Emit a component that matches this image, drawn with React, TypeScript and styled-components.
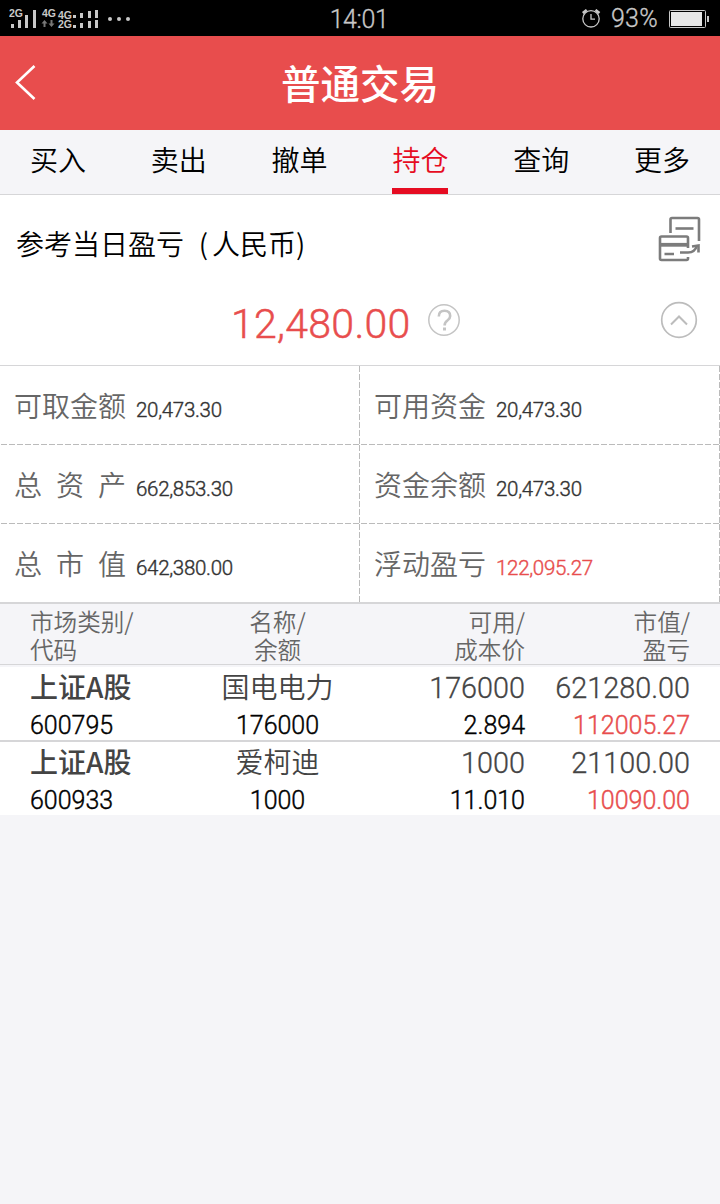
import React from 'react';
import styled, { createGlobalStyle } from 'styled-components';

const RED = '#e84d4d';
const LINE = '#d6d6d8';
const CJK = '"Noto Sans CJK SC", sans-serif';
const NUM = 'Roboto, "Noto Sans CJK SC", sans-serif';

const GlobalStyle = createGlobalStyle`
  * { box-sizing: border-box; }
  html, body { margin: 0; background: #f5f5f8; }
  body { font-family: ${CJK}; font-weight: 350; }
`;

const Screen = styled.div`
  width: 720px;
  min-height: 1204px;
  background: #f5f5f8;
`;

const StatusBar = styled.div`
  display: grid;
  grid-template-columns: 1fr auto 1fr;
  align-items: center;
  height: 36px;
  padding: 0 11px 0 9px;
  background: #000;
  color: #c8c8c8;
`;

const StatusSide = styled.div`
  display: flex;
  align-items: center;
  height: 36px;
`;

const StatusEnd = styled(StatusSide)`
  justify-content: flex-end;
`;

const Clock = styled.div`
  font: 300 25px/36px ${NUM};
  -webkit-text-stroke: 0.3px currentColor;
  letter-spacing: -0.4px;
  padding-top: 2px;
`;

const Percent = styled.span`
  font: 300 25px/36px ${NUM};
  -webkit-text-stroke: 0.3px currentColor;
  letter-spacing: 0.3px;
  margin: 0 11px 0 9px;
`;

const TitleBar = styled.header`
  display: grid;
  grid-template-columns: 60px 1fr 60px;
  align-items: center;
  height: 94px;
  background: ${RED};
  color: #fff;
`;

const Title = styled.h1`
  margin: 0 0 2px;
  text-align: center;
  font: 500 39.5px/58px ${CJK};
`;

const Tabs = styled.nav`
  display: flex;
  justify-content: space-between;
  height: 65px;
  padding: 0 30px;
  border-bottom: 1px solid ${LINE};
`;

const Tab = styled.div<{ $active?: boolean }>`
  height: 64px;
  width: 56px;
  font-size: 28px;
  line-height: 58px;
  white-space: nowrap;
  color: ${p => (p.$active ? '#e60c22' : '#000')};
  border-bottom: ${p => (p.$active ? '6px solid #e60c22' : '0')};
`;

const Summary = styled.section`
  height: 171px;
  background: #fff;
  border-bottom: 1px solid ${LINE};
`;

const SummaryHead = styled.div`
  display: flex;
  justify-content: space-between;
  align-items: center;
  height: 95px;
  padding: 0 18px 0 16px;

  > svg { margin-bottom: 8px; }
`;

const SummaryTitle = styled.div`
  font-size: 28px;
  line-height: 40px;
  color: #000;
`;

const Paren = styled.span`
  display: inline-block;
  width: 28px;
  padding-right: 4px;
  text-align: right;
`;

const SummaryValue = styled.div`
  display: grid;
  grid-template-columns: 231px auto 1fr auto;
  align-items: center;
  height: 60px;
  padding-right: 22px;
`;

const BigNumber = styled.div`
  grid-column: 2;
  font: 300 41px/60px ${NUM};
  -webkit-text-stroke: 0.5px currentColor;
  letter-spacing: 0.3px;
  color: ${RED};
  padding-top: 4px;
  margin-right: 17px;
`;

const Grid = styled.section`
  display: grid;
  grid-template-columns: 360px 360px;
  grid-template-rows: 79px 79px 78px;
  background: #fff;
`;

const Cell = styled.div<{ $last?: boolean }>`
  display: flex;
  align-items: baseline;
  padding: 19px 0 0 14px;
  background-image:
    repeating-linear-gradient(to bottom, #bbb 0 6px, transparent 6px 8px),
    repeating-linear-gradient(to right, #bbb 0 6px, transparent 6px 8px);
  background-size: 1px 100%, ${p => (p.$last ? '0 0' : '100% 1px')};
  background-position: right top, 1px bottom;
  background-repeat: no-repeat;
`;

const Label = styled.span`
  display: flex;
  justify-content: space-between;
  width: 112px;
  font-size: 28px;
  line-height: 40px;
  color: #666;
`;

const Amount = styled.span<{ $red?: boolean }>`
  margin-left: 10px;
  font: 300 20.5px/40px Roboto, sans-serif;
  -webkit-text-stroke: 0.4px currentColor;
  letter-spacing: -0.3px;
  color: ${p => (p.$red ? RED : '#333')};
`;

const Row = styled.div`
  display: grid;
  grid-template-columns: repeat(4, 165px);
  padding: 0 30px;
`;

const TableHead = styled(Row)`
  height: 63px;
  padding-top: 3px;
  border-top: 2px solid ${LINE};
  border-bottom: 1px solid ${LINE};
  font-size: 23.6px;
  line-height: 28px;
  color: #666;
`;

const Holding = styled(Row)`
  height: 75px;
  background: #fff;
  border-bottom: 2px solid ${LINE};
  &:last-child { height: 73px; border-bottom: 0; }
`;

const Holdings = styled.section`
  padding-top: 2px;
`;

const Col = styled.div<{ $align: string }>`
  text-align: ${p => p.$align};
  white-space: nowrap;
`;

const Main = styled.div<{ $kind?: 'bold' | 'num' }>`
  height: 40px;
  font-family: ${p => (p.$kind === 'num' ? NUM : CJK)};
  font-weight: ${p => (p.$kind === 'bold' ? 500 : p.$kind === 'num' ? 300 : 350)};
  -webkit-text-stroke: ${p => (p.$kind === 'num' ? '0.3px' : '0')} currentColor;
  font-size: ${p => (p.$kind === 'num' ? 28.8 : 28)}px;
  line-height: ${p => (p.$kind === 'num' ? 42 : 38)}px;
  color: #444;
`;

const Sub = styled.div<{ $red?: boolean }>`
  font: 300 25px/38px ${NUM};
  -webkit-text-stroke: 0.4px currentColor;
  color: ${p => (p.$red ? RED : '#000')};
`;

const SignalIcon = () => (
  <svg width="124" height="36" viewBox="9 0 124 36" fill="#c8c8c8" fontFamily="Liberation Sans" fontWeight="700">
    <text x="9" y="16" fontSize="10.5" textLength="14" lengthAdjust="spacingAndGlyphs">2G</text>
    <path d="M11 23h3v4h-3zM18 19h3v8h-3zM25 14h3v13h-3zM33 9h3v18h-3z" />
    <text x="42" y="16" fontSize="10.5" textLength="14" lengthAdjust="spacingAndGlyphs">4G</text>
    <path d="M44.500 19l3 3.500h-2v3.500h-2v-3.500h-2zM51.500 26l3-3.500h-2v-3.500h-2v3.500h-2z" fill="#777" />
    <text x="58" y="17.500" fontSize="10.5" textLength="14" lengthAdjust="spacingAndGlyphs">4G</text>
    <text x="58" y="27" fontSize="10.5" textLength="14" lengthAdjust="spacingAndGlyphs">2G</text>
    <path d="M73 14h3v3h-3zM80 12h3v5h-3zM88 10h3v7h-3zM95 9h3v8h-3zM73 24h3v3h-3zM80 22h3v5h-3zM88 20h3v7h-3zM95 19h3v8h-3z" />
    <circle cx="110" cy="18" r="2" /><circle cx="119" cy="18" r="2" /><circle cx="128" cy="18" r="2" />
  </svg>
);

const AlarmIcon = () => (
  <svg width="20" height="20" viewBox="0 0 20 20" fill="none" stroke="#c8c8c8">
    <circle cx="9" cy="9.800" r="8.200" strokeWidth="1.300" />
    <path d="M9 5v5.200h4" strokeWidth="1.300" />
    <path d="M.700 4L4.700 .900M13.500 .900L17.500 4" strokeWidth="2.500" />
  </svg>
);

const BatteryIcon = () => (
  <svg width="40" height="18" viewBox="0 0 40 18">
    <rect x=".5" y=".5" width="36" height="17" rx="1" fill="none" stroke="#c8c8c8" />
    <rect x="2" y="2" width="31" height="14" fill="#e6e6e6" />
    <rect x="38" y="6" width="2" height="6" fill="#c8c8c8" />
  </svg>
);

const BackIcon = () => (
  <svg width="60" height="94" viewBox="0 0 60 94" fill="none" stroke="#fff" strokeWidth="2.600">
    <path d="M34.500 30L17 46.500L34.500 63" strokeLinejoin="miter" />
  </svg>
);

const TransferIcon = () => (
  <svg width="44" height="46" viewBox="0 0 44 46" fill="none" stroke="#7c7c7c" strokeWidth="2.600">
    <path d="M12.500 17V3.500q0-1.500 1.500-1.500h25.500q1.500 0 1.500 1.500V25" />
    <path d="M17.500 12.500h18" />
    <path d="M30 32V22q0-1.500-1.500-1.500h-25q-1.500 0-1.500 1.500V42.500q0 1.500 1.500 1.500h25q1.500 0 1.500-1.500V41" />
    <path d="M2 28.800h28" strokeWidth="3.800" />
    <path d="M6.500 38h9.500M22 36.500h8q7 0 9-7" />
    <path d="M34 30.500l6.500-1v7" />
  </svg>
);

const HelpIcon = () => (
  <svg width="32" height="32" viewBox="0 0 32 32" fill="none" stroke="#c4c4c4">
    <circle cx="16" cy="16" r="15.200" strokeWidth="1.500" />
    <path d="M10.800 12.500q0-5.700 5.700-5.700t5.700 5.200q0 2.500-2.800 4.500t-2.800 5" strokeWidth="2.600" />
    <path d="M15 23.500h3v3h-3z" fill="#c4c4c4" stroke="none" />
  </svg>
);

const CollapseIcon = () => (
  <svg width="38" height="38" viewBox="0 0 38 38" fill="none" stroke="#bcbcbc">
    <circle cx="19" cy="19" r="17.300" strokeWidth="1.700" />
    <path d="M11 23.500l8-8l8 8" strokeWidth="2" />
  </svg>
);

const IconSlot = styled.span`
  display: flex;
  padding-bottom: 4px;
`;

const tabs = ['买入', '卖出', '撤单', '持仓', '查询', '更多'];

const cells = [
  ['可取金额', '20,473.30'],
  ['可用资金', '20,473.30'],
  ['总资产', '662,853.30'],
  ['资金余额', '20,473.30'],
  ['总市值', '642,380.00'],
  ['浮动盈亏', '122,095.27'],
];

const holdings = [
  ['上证A股', '600795', '国电电力', '176000', '176000', '2.894', '621280.00', '112005.27'],
  ['上证A股', '600933', '爱柯迪', '1000', '1000', '11.010', '21100.00', '10090.00'],
];

export default function App() {
  return (
    <Screen>
      <GlobalStyle />
      <StatusBar>
        <StatusSide><SignalIcon /></StatusSide>
        <Clock>14:01</Clock>
        <StatusEnd><AlarmIcon /><Percent>93%</Percent><BatteryIcon /></StatusEnd>
      </StatusBar>
      <TitleBar>
        <BackIcon />
        <Title>普通交易</Title>
      </TitleBar>
      <Tabs>
        {tabs.map(t => <Tab key={t} $active={t === '持仓'}>{t}</Tab>)}
      </Tabs>
      <Summary>
        <SummaryHead>
          <SummaryTitle>参考当日盈亏<Paren>(</Paren>人民币)</SummaryTitle>
          <TransferIcon />
        </SummaryHead>
        <SummaryValue>
          <BigNumber>12,480.00</BigNumber>
          <IconSlot><HelpIcon /></IconSlot>
          <IconSlot><CollapseIcon /></IconSlot>
        </SummaryValue>
      </Summary>
      <Grid>
        {cells.map(([label, value], i) => (
          <Cell key={label} $last={i > 3}>
            <Label>{[...label].map((ch, j) => <span key={j}>{ch}</span>)}</Label>
            <Amount $red={i === 5}>{value}</Amount>
          </Cell>
        ))}
      </Grid>
      <TableHead>
        <Col $align="left">市场类别/<br />代码</Col>
        <Col $align="center">名称/<br />余额</Col>
        <Col $align="right">可用/<br />成本价</Col>
        <Col $align="right">市值/<br />盈亏</Col>
      </TableHead>
      <Holdings>
        {holdings.map(([market, code, name, balance, avail, cost, value, profit]) => (
          <Holding key={code}>
            <Col $align="left"><Main $kind="bold">{market}</Main><Sub>{code}</Sub></Col>
            <Col $align="center"><Main>{name}</Main><Sub>{balance}</Sub></Col>
            <Col $align="right"><Main $kind="num">{avail}</Main><Sub>{cost}</Sub></Col>
            <Col $align="right"><Main $kind="num">{value}</Main><Sub $red>{profit}</Sub></Col>
          </Holding>
        ))}
      </Holdings>
    </Screen>
  );
}
